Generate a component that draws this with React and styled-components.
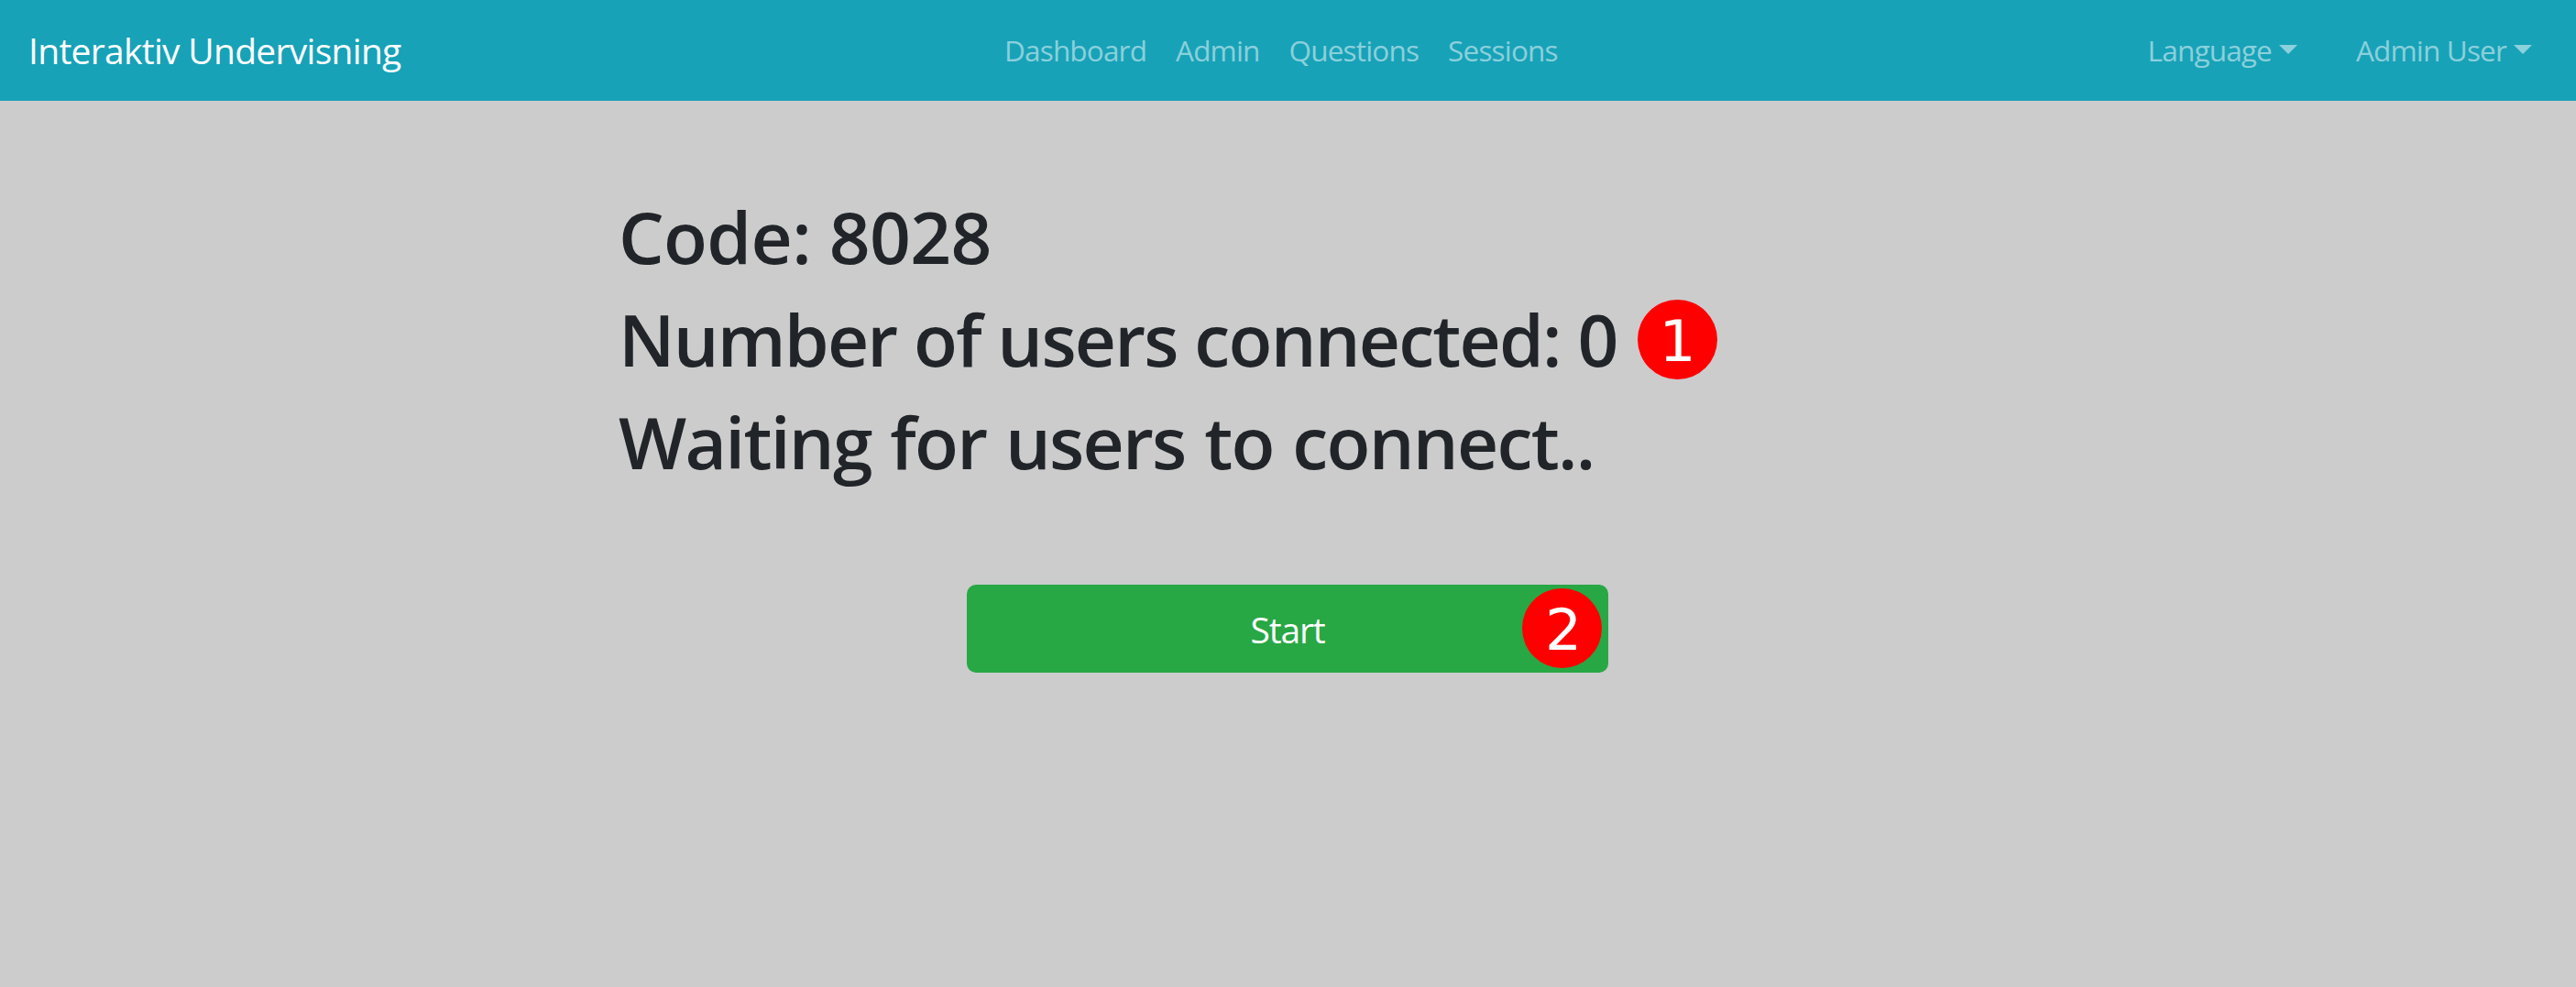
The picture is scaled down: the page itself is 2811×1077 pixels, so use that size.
import React from "react";
import styled, { createGlobalStyle } from "styled-components";

const GlobalStyle = createGlobalStyle`
  *, *::before, *::after { box-sizing: border-box; }
  body {
    margin: 0;
    background: #ccc;
    color: #212529;
    font-family: "Segoe UI", "Open Sans", "Noto Sans", sans-serif;
  }
`;

const Page = styled.div`
  min-height: 1077px;
  overflow: hidden;
`;

const Navbar = styled.nav`
  display: grid;
  grid-template-columns: 1049px auto 1fr;
  align-items: center;
  height: 110px;
  padding: 0 32px 0 31px;
  background: #17a2b8;
  white-space: nowrap;
`;

const Brand = styled.a`
  color: #fff;
  font-size: 39px;
  line-height: 60px;
  letter-spacing: -0.71px;
`;

const NavList = styled.div`
  display: flex;
  justify-content: ${(p) => (p.$end ? "flex-end" : "center")};
  gap: ${(p) => (p.$end ? "32px" : "0")};
`;

const NavLink = styled.a`
  display: flex;
  align-items: center;
  padding: 0 16px;
  color: rgba(255, 255, 255, 0.5);
  font-size: 31.5px;
  line-height: 48px;
  letter-spacing: -0.83px;
`;

const Caret = styled.span`
  margin: -3px 0 0 8px;
  border: 10px solid transparent;
  border-top-color: currentColor;
  border-bottom: 0;
`;

const Main = styled.main`
  width: 1460px;
  margin: 0 0 0 675px;
  padding-top: 100px;
`;

const Heading = styled.h1`
  display: flex;
  align-items: center;
  height: 96px;
  margin: 0 0 16px;
  font-size: 78.5px;
  font-weight: 600;
  line-height: 96px;
  letter-spacing: ${(p) => p.$tracking}px;
  word-spacing: ${(p) => p.$wordGap || 0}px;
  white-space: nowrap;
`;

const StartButton = styled.button`
  position: relative;
  display: block;
  width: 700px;
  height: 96px;
  margin: 108px auto 0;
  padding: 2px 0 0;
  border: 0;
  border-radius: 10px;
  background: #28a745;
  color: #fff;
  font-family: inherit;
  font-size: 39px;
  line-height: 94px;
  letter-spacing: -1.2px;
`;

const Marker = styled.span`
  display: flex;
  align-items: center;
  justify-content: center;
  width: 87px;
  height: 87px;
  padding: 4px 0 0 1px;
  margin-left: 22px;
  border-radius: 50%;
  background: #f00;
  color: #fff;
  font: 400 63px/83px "DejaVu Sans", sans-serif;
  letter-spacing: 0;
`;

const ButtonMarker = styled(Marker)`
  position: absolute;
  top: 4px;
  right: 7px;
  padding-left: 3px;
  margin: 0;
`;

const links = ["Dashboard", "Admin", "Questions", "Sessions"];
const menus = ["Language", "Admin User"];

export default function App() {
  return (
    <Page>
      <GlobalStyle />
      <Navbar>
        <Brand>Interaktiv Undervisning</Brand>
        <NavList>
          {links.map((label) => (
            <NavLink key={label}>{label}</NavLink>
          ))}
        </NavList>
        <NavList $end>
          {menus.map((label) => (
            <NavLink key={label}>
              {label}
              <Caret />
            </NavLink>
          ))}
        </NavList>
      </Navbar>
      <Main>
        <Heading $tracking={-0.65}>Code: 8028</Heading>
        <Heading $tracking={-1.8}>
          Number of users connected: 0<Marker>1</Marker>
        </Heading>
        <Heading $tracking={-1.75} $wordGap={2}>
          Waiting for users to connect..
        </Heading>
        <StartButton>
          Start
          <ButtonMarker>2</ButtonMarker>
        </StartButton>
      </Main>
    </Page>
  );
}
